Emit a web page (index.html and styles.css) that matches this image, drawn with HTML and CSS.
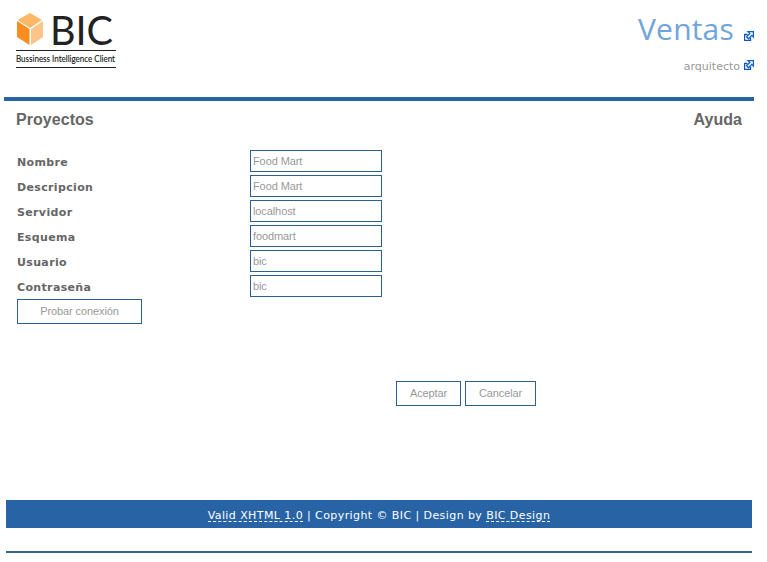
FILE: index.html
```html
<!DOCTYPE html>
<html lang="es">
<head>
<meta charset="utf-8">
<title>BIC - Proyectos</title>
<link rel="stylesheet" href="styles.css">
</head>
<body>
<svg class="defs" width="0" height="0" aria-hidden="true">
  <symbol id="external" viewBox="0 0 10 10">
    <path d="M3.5 3.5h-3v6h6v-3" fill="#fff" stroke="#0b55b8" stroke-width="1.3"/>
    <path d="M4 .6h5.4V6L7.8 4.4 4.5 7.8l-2-2 3.3-3.4z" fill="#fff" stroke="#0b5fd0" stroke-width="1.3"/>
  </symbol>
</svg>
<header class="header">
  <svg class="logo" width="110" height="66" viewBox="0 0 110 66" role="img" aria-label="BIC">
    <path d="M1.5 8 14 1l12 7-12 8z" fill="#fdb766"/>
    <path d="M1 9l12.5 8v16L1 25z" fill="#fb8c20"/>
    <path d="M27 9v16l-12 8V17z" fill="#fdc48a"/>
    <text class="logo-name" x="34" y="32.5" textLength="63" lengthAdjust="spacingAndGlyphs">BIC</text>
    <path d="M0 38.5h100M0 55.5h100" stroke="#222"/>
    <text class="logo-sub" x="0" y="50" textLength="99" lengthAdjust="spacingAndGlyphs">Bussiness Intelligence Client</text>
  </svg>
  <div class="session">
    <div class="module"><span>Ventas</span><svg class="ext" width="10" height="10"><use href="#external"/></svg></div>
    <div class="user"><span>arquitecto</span><svg class="ext" width="10" height="10"><use href="#external"/></svg></div>
  </div>
</header>
<nav class="nav"><span class="projects">Proyectos</span><span class="help">Ayuda</span></nav>
<form class="form">
  <div class="row"><label>Nombre</label><input value="Food Mart"></div>
  <div class="row"><label>Descripcion</label><input value="Food Mart"></div>
  <div class="row"><label>Servidor</label><input value="localhost"></div>
  <div class="row"><label>Esquema</label><input value="foodmart"></div>
  <div class="row"><label>Usuario</label><input value="bic"></div>
  <div class="row"><label>Contraseña</label><input value="bic"></div>
  <button type="button" class="test">Probar conexión</button>
  <div class="actions"><button type="button" class="accept">Aceptar</button><button type="button" class="cancel">Cancelar</button></div>
</form>
<footer class="footer">
  <p class="credits"><a>Valid XHTML 1.0</a> | Copyright © BIC | Design by <a>BIC Design</a></p>
</footer>
</body>
</html>
```
FILE: styles.css
```css
* { box-sizing: border-box; }
body { margin: 0; height: 562px; overflow: hidden; background: #fff; color: #666; font: 11px "DejaVu Sans", sans-serif; }
.defs { display: block; }
.header { display: flex; justify-content: space-between; margin: 0 13px 0 4px; height: 101px; border-bottom: 4px solid #2863a5; }
.logo { margin: 12px 0 0 12px; overflow: visible; }
.logo-name { font: 41px Lato, sans-serif; fill: #222; }
.logo-sub { font: 9px Lato, sans-serif; fill: #111; stroke: #111; stroke-width: .1px; }
.session { display: flex; flex-direction: column; align-items: flex-end; }
.module, .user { display: flex; }
.module { height: 58px; color: #6fa4dc; font: 30px/58px "Open Sans", sans-serif; letter-spacing: .2px; }
.module .ext { margin: 31px 0 0 10px; }
.user { height: 16px; color: #999; line-height: 17px; }
.user .ext { margin: 2px 0 0 4px; }
.nav { display: flex; justify-content: space-between; height: 49px; padding: 9px 25px 0 16px; font: bold 16px/20px "Liberation Sans", sans-serif; letter-spacing: .05px; }
.form { height: 350px; padding-left: 17px; }
.row { display: flex; height: 25px; }
.row label { width: 233px; line-height: 25px; font-weight: bold; letter-spacing: .35px; }
input, button { border: 1px solid #2c6090; background: #fff; color: #999; font: 11px "Liberation Sans", sans-serif; letter-spacing: -.1px; }
input { width: 132px; height: 22px; padding: 0 2px; }
button { display: block; height: 25px; padding: 0 0 2px; }
.test { width: 125px; margin-top: -1px; }
.actions { display: flex; gap: 4px; margin: 57px 0 0 379px; }
.accept { width: 65px; }
.cancel { width: 71px; }
.footer { margin: 0 15px 0 6px; height: 53px; border-bottom: 2px solid #3a6390; }
.credits { margin: 0; height: 28px; background: #2863a5; color: #fff; text-align: center; line-height: 31px; letter-spacing: .42px; }
.credits a { display: inline-block; height: 13px; line-height: 13px; border-bottom: 1px dashed #fff; }
```
